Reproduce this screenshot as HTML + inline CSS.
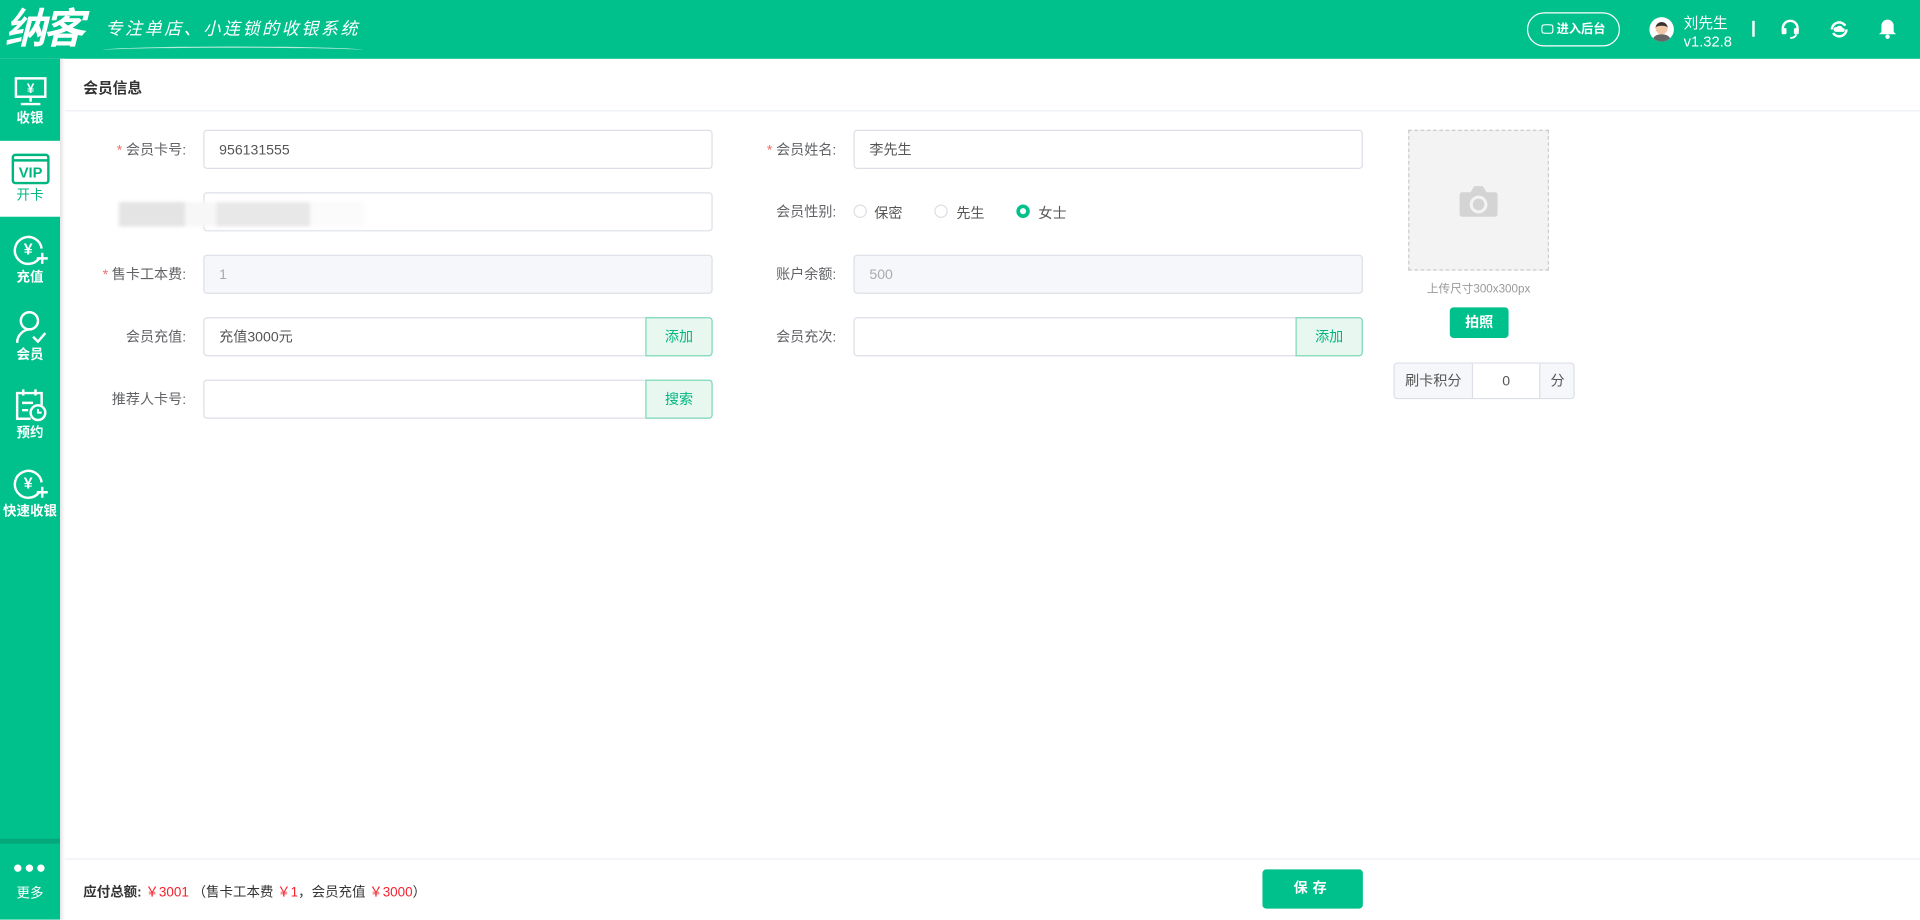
<!DOCTYPE html>
<html><head><meta charset="utf-8">
<style>
*{box-sizing:border-box;margin:0;padding:0}
html,body{width:1920px;height:919px;overflow:hidden;background:#fff}
#w{position:absolute;left:0;top:0;width:1568px;height:751px;transform:scale(1.22449);transform-origin:0 0;font-family:"Liberation Sans","Noto Sans CJK SC",sans-serif;color:#555;font-size:11.5px}
.abs{position:absolute}
.hd{left:0;top:0;width:1568px;height:48px;background:#00c08b}
.sb{left:0;top:48px;width:49px;height:703px;background:#00c08b}
.it{position:absolute;left:0;width:49px;text-align:center;color:#fff;font-size:11px;font-weight:bold}
.lbl{position:absolute;width:160px;text-align:right;font-size:11.5px;color:#606266;line-height:35px;height:32px}
.req{color:#f56c6c;margin-right:3px}
.inp{position:absolute;height:32px;border:1px solid #dcdfe6;border-radius:3px;background:#fff;line-height:33px;padding-left:12px;color:#555}
.dis{background:#f5f7fa;color:#aaa}
.btn{position:absolute;right:-1px;top:-1px;width:55px;height:32px;background:#e8f8f1;border:1px solid #7dd9b8;border-radius:0 3px 3px 0;color:#00b67f;text-align:center;line-height:32px}
.rd{position:absolute;top:167px;width:11px;height:11px;border:1px solid #dcdfe6;border-radius:50%}
</style></head><body><div id="w">
<div class="abs hd"></div>
<div class="abs" style="left:4px;top:4px;color:#fff;font-size:34px;font-weight:bold;letter-spacing:-3px;line-height:40px;font-style:italic">纳客</div>
<div class="abs" style="left:86px;top:13px;color:#fff;font-size:14px;letter-spacing:2px;font-style:italic">专注单店、小连锁的收银系统</div>
<div class="abs" style="left:84px;top:38px;width:212px;height:6px;border-top:1px solid rgba(255,255,255,.7);border-radius:50%"></div>
<div class="abs" style="left:1247px;top:10px;width:76px;height:28px;border:1px solid #fff;border-radius:14px;color:#fff;font-size:10px;font-weight:bold;line-height:27px;text-align:center">🖵 进入后台</div>
<div class="abs" style="left:1347px;top:14px;width:20px;height:20px;border-radius:50%;background:#fff;overflow:hidden"><div class="abs" style="left:5px;top:4px;width:10px;height:10px;border-radius:50%;background:#f1c7a5;border-top:3px solid #333"></div><div class="abs" style="left:3px;top:14px;width:14px;height:8px;border-radius:50% 50% 0 0;background:#666"></div></div>
<div class="abs" style="left:1375px;top:10px;color:#fff;font-size:12px">刘先生</div>
<div class="abs" style="left:1375px;top:27px;color:#fff;font-size:12px">v1.32.8</div>
<div class="abs" style="left:1431px;top:17px;width:2px;height:13px;background:#fff"></div>
<svg class="abs" style="left:1454px;top:16px" width="16" height="16" viewBox="0 0 16 16"><path d="M2 9V7a6 6 0 0 1 12 0v2" stroke="#fff" stroke-width="2" fill="none"/><rect x="1" y="7" width="4" height="5" rx="1" fill="#fff"/><rect x="11" y="7" width="4" height="5" rx="1" fill="#fff"/><path d="M13 12q-1 3-5 3" stroke="#fff" stroke-width="1.5" fill="none"/></svg>
<svg class="abs" style="left:1494px;top:16px" width="16" height="16" viewBox="0 0 16 16"><path d="M2 8a6 6 0 0 1 11-3M14 8a6 6 0 0 1-11 3" stroke="#fff" stroke-width="2" fill="none"/><path d="M5 10a2 2 0 0 1 1-4 3 3 0 0 1 5 1 1.5 1.5 0 0 1 0 3z" fill="#fff"/></svg>
<svg class="abs" style="left:1534px;top:15px" width="15" height="17" viewBox="0 0 15 17"><path d="M7.5 1a5 5 0 0 0-5 5v5l-2 2h14l-2-2V6a5 5 0 0 0-5-5z" fill="#fff"/><circle cx="7.5" cy="15" r="1.8" fill="#fff"/></svg>

<div class="abs sb"></div>
<div class="abs" style="left:49px;top:48px;width:4px;height:703px;background:linear-gradient(90deg,#e4e4e4,#fff)"></div>
<div class="it" style="top:58px;height:55px">
<svg width="28" height="26" viewBox="0 0 28 26" style="display:block;margin:4px auto 0"><rect x="2" y="2" width="24" height="15" stroke="#fff" stroke-width="2" fill="none"/><path d="M14 17v4M6 23h16" stroke="#fff" stroke-width="2"/><text x="14" y="14" fill="#fff" font-size="11" font-weight="bold" text-anchor="middle">¥</text></svg>收银</div>
<div class="it" style="top:115px;height:62px;background:#fff;color:#00b67f;font-weight:normal">
<svg width="32" height="26" viewBox="0 0 32 26" style="display:block;margin:10px auto 0"><rect x="1.5" y="1.5" width="29" height="23" rx="2" stroke="#00b67f" stroke-width="2" fill="none"/><path d="M1.5 6h29" stroke="#00b67f" stroke-width="2"/><text x="16" y="20" fill="#00b67f" font-size="12" font-weight="bold" text-anchor="middle">VIP</text></svg>开卡</div>
<div class="it" style="top:190px"><svg width="30" height="28" viewBox="0 0 30 28" style="display:block;margin:0 auto"><path d="M22 21a11 11 0 1 1 2-8" stroke="#fff" stroke-width="2" fill="none"/><path d="M20 21h9M24.5 16.5v9" stroke="#fff" stroke-width="2"/><text x="13" y="18" fill="#fff" font-size="13" font-weight="bold" text-anchor="middle">¥</text></svg>充值</div>
<div class="it" style="top:253px"><svg width="28" height="28" viewBox="0 0 28 28" style="display:block;margin:0 auto"><circle cx="13" cy="9" r="7" stroke="#fff" stroke-width="2" fill="none"/><path d="M3 27a11 11 0 0 1 12-11M16 22l4 4 6-7" stroke="#fff" stroke-width="2" fill="none"/></svg>会员</div>
<div class="it" style="top:317px"><svg width="28" height="28" viewBox="0 0 28 28" style="display:block;margin:0 auto"><path d="M14 25H3V4h20v10" stroke="#fff" stroke-width="2" fill="none"/><path d="M8 1v5M18 1v5M7 12h9M7 18h5" stroke="#fff" stroke-width="2"/><circle cx="20" cy="20" r="6" stroke="#fff" stroke-width="2" fill="none"/><path d="M20 17v3h3" stroke="#fff" stroke-width="1.6" fill="none"/></svg>预约</div>
<div class="it" style="top:381px"><svg width="30" height="28" viewBox="0 0 30 28" style="display:block;margin:0 auto"><path d="M22 21a11 11 0 1 1 2-8" stroke="#fff" stroke-width="2" fill="none"/><path d="M20 21h9M24.5 16.5v9" stroke="#fff" stroke-width="2"/><text x="13" y="18" fill="#fff" font-size="13" font-weight="bold" text-anchor="middle">¥</text></svg>快速收银</div>
<div class="abs" style="left:0;top:685px;width:49px;height:4px;background:#05a87a"></div>
<div class="it" style="top:703px;font-weight:normal"><div style="font-size:14px;letter-spacing:1px;line-height:10px">●●●</div><div style="margin-top:8px">更多</div></div>

<div class="abs" style="left:68px;top:63px;font-size:12px;font-weight:bold;color:#333">会员信息</div>
<div class="abs" style="left:53px;top:90px;width:1515px;height:1px;background:#ebeef5"></div>

<div class="lbl" style="left:-8px;top:106px"><span class="req">*</span>会员卡号:</div>
<div class="inp" style="left:166px;top:106px;width:416px">956131555</div>
<div class="inp" style="left:166px;top:157px;width:416px"></div>
<div class="abs" style="left:97px;top:165px;width:200px;height:20px;background:linear-gradient(90deg,#e4e4e4 0 27%,#f7f7f7 27% 40%,#e8e8e8 40% 78%,#fbfbfb 78%);filter:blur(1.5px)"></div>
<div class="lbl" style="left:-8px;top:208px"><span class="req">*</span>售卡工本费:</div>
<div class="inp dis" style="left:166px;top:208px;width:416px">1</div>
<div class="lbl" style="left:-8px;top:259px">会员充值:</div>
<div class="inp" style="left:166px;top:259px;width:416px">充值3000元<div class="btn">添加</div></div>
<div class="lbl" style="left:-8px;top:310px">推荐人卡号:</div>
<div class="inp" style="left:166px;top:310px;width:416px"><div class="btn">搜索</div></div>

<div class="lbl" style="left:523px;top:106px"><span class="req">*</span>会员姓名:</div>
<div class="inp" style="left:697px;top:106px;width:416px">李先生</div>
<div class="lbl" style="left:523px;top:157px">会员性别:</div>
<div class="rd" style="left:697px"></div><div class="abs" style="left:714px;top:166px">保密</div>
<div class="rd" style="left:763px"></div><div class="abs" style="left:781px;top:166px">先生</div>
<div class="rd" style="left:830px;border:3.5px solid #00c08b"></div><div class="abs" style="left:848px;top:166px">女士</div>
<div class="lbl" style="left:523px;top:208px">账户余额:</div>
<div class="inp dis" style="left:697px;top:208px;width:416px">500</div>
<div class="lbl" style="left:523px;top:259px">会员充次:</div>
<div class="inp" style="left:697px;top:259px;width:416px"><div class="btn">添加</div></div>

<div class="abs" style="left:1150px;top:106px;width:115px;height:115px;border:1px dashed #ccc;background:#f3f3f3"></div>
<svg class="abs" style="left:1191px;top:151px" width="33" height="27" viewBox="0 0 33 27"><path d="M3 6h7l3-5h7l3 5h7a2 2 0 0 1 2 2v16a2 2 0 0 1-2 2H3a2 2 0 0 1-2-2V8a2 2 0 0 1 2-2z" fill="#d4d4d4"/><circle cx="16.5" cy="16" r="6" fill="none" stroke="#f3f3f3" stroke-width="2.5"/></svg>
<div class="abs" style="left:1150px;top:228px;width:115px;text-align:center;font-size:9.5px;color:#999">上传尺寸300x300px</div>
<div class="abs" style="left:1184px;top:251px;width:48px;height:25px;border-radius:3px;background:#00c08b;color:#fff;font-weight:bold;text-align:center;line-height:26px">拍照</div>
<div class="abs" style="left:1138px;top:296px;width:148px;height:30px;border:1px solid #dcdfe6;border-radius:3px;background:#f5f7fa;line-height:30px">
<span class="abs" style="left:0;width:63px;text-align:center">刷卡积分</span>
<span class="abs" style="left:63px;width:56px;height:28px;background:#fff;border-left:1px solid #dcdfe6;border-right:1px solid #dcdfe6;text-align:center">0</span>
<span class="abs" style="left:119px;width:28px;text-align:center">分</span></div>

<div class="abs" style="left:53px;top:701px;width:1515px;height:1px;background:#ebeef5"></div>
<div class="abs" style="left:68px;top:720px;font-size:11px;color:#333"><b>应付总额:</b> <span style="color:#f5222d">￥3001</span> （售卡工本费 <span style="color:#f5222d">￥1</span>，会员充值 <span style="color:#f5222d">￥3000</span>）</div>
<div class="abs" style="left:1031px;top:710px;width:82px;height:32px;border-radius:3px;background:#00c08b;color:#fff;font-weight:bold;text-align:center;line-height:32px;letter-spacing:4px">保存</div>
</div></body></html>
